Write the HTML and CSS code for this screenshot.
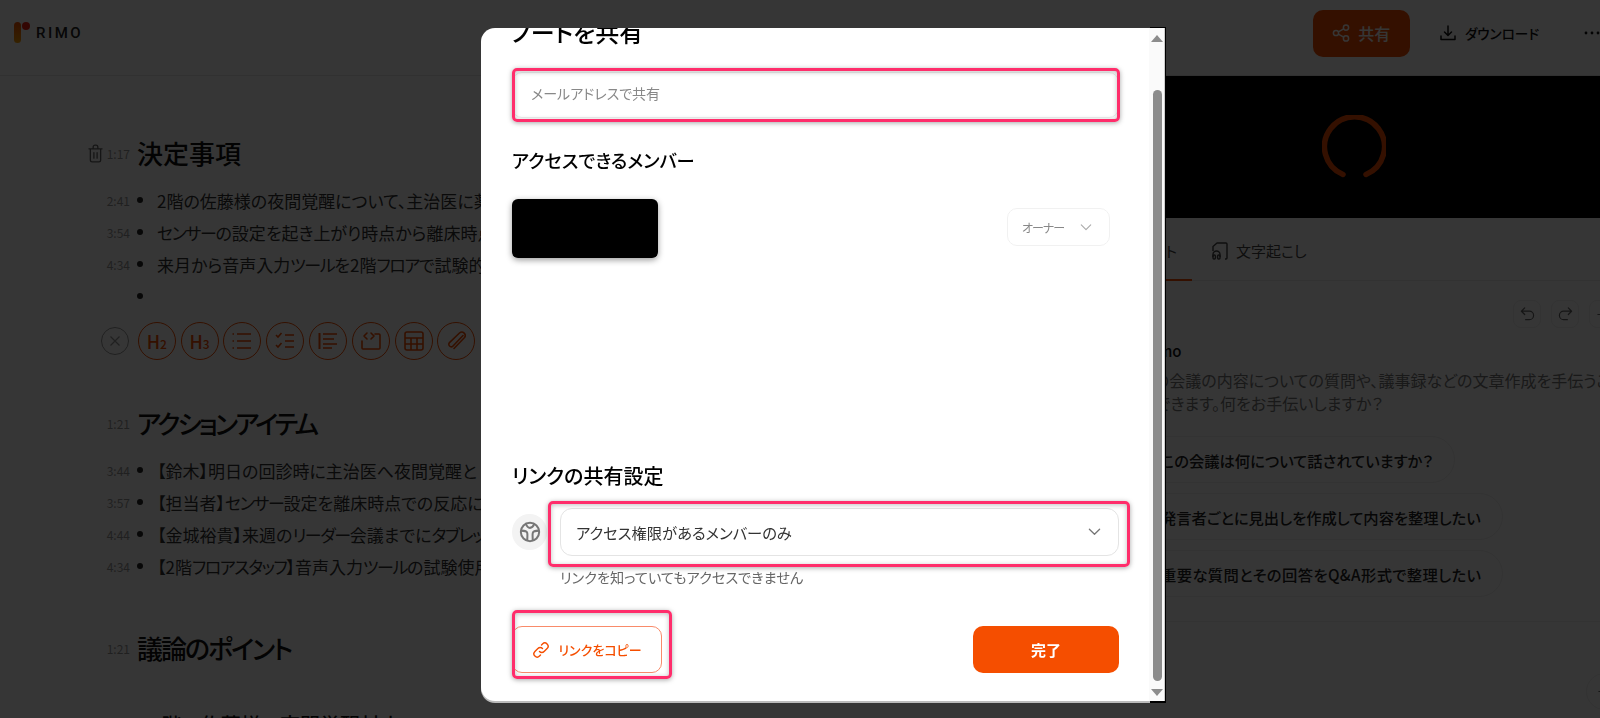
FILE: index.html
```html
<!DOCTYPE html>
<html lang="ja">
<head>
    <meta charset="UTF-8">
    <meta name="viewport" content="width=device-width, initial-scale=1.0">
    <title>RIMO ノートを共有</title>
    <link rel="stylesheet" href="styles.css">
</head>
<body>

<div class="app">
    <header class="topbar">
        <div class="logo">
            <span class="logo-bar"></span>
            <span class="logo-dot"></span>
            <span class="logo-text">RIMO</span>
        </div>
        <div class="topbar-actions">
            <button class="share-btn">
                <svg class="icon-18" viewBox="0 0 18 18" fill="none" stroke="currentColor" stroke-width="1.5"><circle cx="4" cy="9" r="2.6"/><circle cx="14" cy="3.6" r="2.6"/><circle cx="14" cy="14.4" r="2.6"/><path d="M6.3 7.8 11.7 4.9M6.3 10.2l5.4 2.9"/></svg>
                共有
            </button>
            <button class="download-btn">
                <svg class="icon-18" viewBox="0 0 18 18" fill="none" stroke="currentColor" stroke-width="1.5" stroke-linecap="round" stroke-linejoin="round"><path d="M9 2v9M5.5 8 9 11.5 12.5 8M2 12v3.5h14V12"/></svg>
                ダウンロード
            </button>
            <svg class="more-icon" viewBox="0 0 16 4" fill="currentColor"><circle cx="2" cy="2" r="1.4"/><circle cx="8" cy="2" r="1.4"/><circle cx="14" cy="2" r="1.4"/></svg>
        </div>
    </header>

    <div class="columns">
        <main class="note">
            <div class="note-heading">
                <span class="time">
                    <svg class="trash" viewBox="0 0 16 20" fill="none" stroke="currentColor" stroke-width="1.4" stroke-linecap="round" stroke-linejoin="round"><path d="M1 5h14M5.5 5V3a2 2 0 0 1 2-2h1a2 2 0 0 1 2 2v2M2.5 5v12a2 2 0 0 0 2 2h7a2 2 0 0 0 2-2V5M6.3 9v6M9.7 9v6"/></svg>
                    1:17
                </span>
                <h2>決定事項</h2>
            </div>
            <ul class="note-list">
                <li><span class="time">2:41</span><span class="dot"></span>2階の佐藤様の夜間覚醒について、主治医に薬</li>
                <li><span class="time">3:54</span><span class="dot"></span><span class="kana">センサー</span>の設定を起き上がり時点から離床時点</li>
                <li><span class="time">4:34</span><span class="dot"></span>来月から音声入力<span class="kana">ツール</span>を2階<span class="kana">フロア</span>で試験的に</li>
                <li><span class="time"></span><span class="dot"></span></li>
            </ul>
            <div class="editor-tools">
                <button class="tool tool-close">
                    <svg viewBox="0 0 12 12" fill="none" stroke="currentColor" stroke-width="1.2"><path d="M1.5 1.5l9 9M10.5 1.5l-9 9"/></svg>
                </button>
                <button class="tool">H<small>2</small></button>
                <button class="tool">H<small>3</small></button>
                <button class="tool">
                    <svg viewBox="0 0 20 18" fill="none" stroke="currentColor" stroke-width="1.6"><path d="M5 2h14M5 9h14M5 16h14"/><path d="M0.5 2h1.5M0.5 9h1.5M0.5 16h1.5"/></svg>
                </button>
                <button class="tool">
                    <svg viewBox="0 0 20 18" fill="none" stroke="currentColor" stroke-width="1.6"><path d="M10 3h9M10 9h9M10 15h9"/><path d="M1 3l2 2 3.5-4M1 13l2 2 3.5-4"/></svg>
                </button>
                <button class="tool">
                    <svg viewBox="0 0 20 18" fill="none" stroke="currentColor" stroke-width="1.6"><path d="M1.5 1v16" stroke-width="2"/><path d="M5 2h14M5 7h11M5 12h14M5 16h9"/></svg>
                </button>
                <button class="tool">
                    <svg viewBox="0 0 20 18" fill="none" stroke="currentColor" stroke-width="1.6" stroke-linejoin="round" stroke-linecap="round"><path d="M1 9v7a1 1 0 0 0 1 1h16a1 1 0 0 0 1-1V3a1 1 0 0 0-1-1h-4"/><path d="M6 1 3 4l3 3M10 1l3 3-3 3"/></svg>
                </button>
                <button class="tool">
                    <svg viewBox="0 0 20 20" fill="none" stroke="currentColor" stroke-width="1.6"><rect x="1" y="1" width="18" height="18" rx="2"/><path d="M1 7h18M1 13h18M7 7v12M13 7v12"/></svg>
                </button>
                <button class="tool">
                    <svg viewBox="0 0 20 20" fill="none" stroke="currentColor" stroke-width="1.6" stroke-linecap="round"><path d="M17 4.5 7 15a2.4 2.4 0 0 1-3.5-3.4L13.5 2a3.4 3.4 0 0 1 4.8 4.8L8 17.5"/></svg>
                </button>
            </div>

            <div class="note-heading second">
                <span class="time">1:21</span>
                <h2>アクションアイテム</h2>
            </div>
            <ul class="note-list">
                <li><span class="time">3:44</span><span class="dot"></span>【鈴木】明日の回診時に主治医へ夜間覚醒と</li>
                <li><span class="time">3:57</span><span class="dot"></span>【担当者】<span class="kana">センサー</span>設定を離床時点での反応に</li>
                <li><span class="time">4:44</span><span class="dot"></span>【金城裕貴】来週の<span class="kana">リーダー</span>会議までに<span class="kana">タブレット</span></li>
                <li><span class="time">4:34</span><span class="dot"></span>【2階<span class="kana">フロアスタッフ</span>】音声入力<span class="kana">ツール</span>の試験使用</li>
            </ul>

            <div class="note-heading third">
                <span class="time">1:21</span>
                <h2>議論のポイント</h2>
            </div>
            <h3 class="note-sub">2階の佐藤様の夜間覚醒対応</h3>
        </main>

        <aside class="side">
            <div class="video">
                <svg class="spinner" viewBox="0 0 64 64" fill="none" stroke="#f54e00" stroke-width="5.5" stroke-linecap="round"><path d="M21 59.5A30 30 0 1 1 44 59.5"/></svg>
            </div>
            <nav class="tabs">
                <span class="tab active">ノート</span>
                <span class="tab">
                    <svg class="icon-18" viewBox="0 0 16 18" fill="none" stroke="currentColor" stroke-width="1.4" stroke-linejoin="round"><path d="M1 9V4.500L5 1h9a1 1 0 0 1 1 1v14a1 1 0 0 1-1 1h-1"/><path d="M1 15v-2.500a3.500 3.500 0 0 1 7 0V15"/><rect x="1" y="13" width="2.400" height="4" rx="1"/><rect x="5.600" y="13" width="2.400" height="4" rx="1"/></svg>
                    文字起こし
                </span>
            </nav>
            <div class="chat-tools">
                <button class="chat-tool">
                    <svg viewBox="0 0 16 16" fill="none" stroke="currentColor" stroke-width="1.3" stroke-linecap="round" stroke-linejoin="round"><path d="M5 1 1.500 4.500 5 8M1.500 4.500H10a4.500 4.500 0 0 1 0 9H6"/></svg>
                </button>
                <button class="chat-tool">
                    <svg viewBox="0 0 16 16" fill="none" stroke="currentColor" stroke-width="1.3" stroke-linecap="round" stroke-linejoin="round"><path d="M11 1l3.500 3.500L11 8M14.500 4.500H6a4.500 4.500 0 0 0 0 9h4"/></svg>
                </button>
                <button class="chat-tool">
                    <svg viewBox="0 0 16 16" fill="none" stroke="currentColor" stroke-width="1.3" stroke-linecap="round"><path d="M8 2v12M2 8h12"/></svg>
                </button>
            </div>
            <div class="chat">
                <strong class="chat-name">Rimo</strong>
                <p class="chat-intro">この会議の内容についての質問や、議事録などの文章作成を手伝うこと<br>ができます。何をお手伝いしますか？</p>
                <div class="chip">この会議は何について話されていますか？</div>
                <div class="chip">発言者ごとに見出しを作成して内容を整理したい</div>
                <div class="chip chip-wide">重要な質問とその回答をQ&amp;A形式で整理したい</div>
            </div>
            <div class="chat-footer">
                <span class="round-btn">
                    <svg viewBox="0 0 16 16" fill="none" stroke="currentColor" stroke-width="1.3" stroke-linecap="round"><path d="M8 2v12M2 8h12"/></svg>
                </span>
            </div>
        </aside>
    </div>
</div>

<div class="overlay">
    <div class="modal">
        <div class="modal-body">
            <h2 class="modal-title">ノートを共有</h2>
            <div class="annotated email-wrap">
                <input class="email-input" type="text" placeholder="メールアドレスで共有">
                <span class="mark"></span>
            </div>

            <h3 class="section-title members-title">アクセスできるメンバー</h3>
            <div class="member-row">
                <div class="redacted"></div>
                <div class="owner-select">
                    オーナー
                    <svg class="chevron" viewBox="0 0 14 8" fill="none" stroke="currentColor" stroke-width="1.300" stroke-linecap="round" stroke-linejoin="round"><path d="M1.500 1 7 6.500 12.500 1"/></svg>
                </div>
            </div>

            <h3 class="section-title link-title">リンクの共有設定</h3>
            <div class="link-row">
                <span class="globe">
                    <svg viewBox="0 0 24 24" fill="none" stroke="currentColor" stroke-width="2.200" stroke-linejoin="round" stroke-linecap="round"><circle cx="12" cy="12" r="10"/><path d="M2.500 10.500c3 0 6 .5 6.500 2.500s0 5 0 8"/><path d="M21.500 10.500c-3 0-6 .5-6.500 2.500s0 5 0 8"/><path d="M7.500 3c1 3 2.500 4.500 4.500 4.500s3.500-1.500 4.500-4"/></svg>
                </span>
                <div class="annotated access-wrap">
                    <div class="access-select">
                        アクセス権限があるメンバーのみ
                        <svg class="chevron" viewBox="0 0 14 8" fill="none" stroke="currentColor" stroke-width="1.400" stroke-linecap="round" stroke-linejoin="round"><path d="M1.500 1 7 6.500 12.500 1"/></svg>
                    </div>
                    <span class="mark"></span>
                </div>
            </div>
            <p class="link-help">リンクを知っていてもアクセスできません</p>

            <div class="modal-footer">
                <div class="annotated copy-wrap">
                    <button class="copy-btn">
                        <svg viewBox="0 0 18 18" fill="none" stroke="currentColor" stroke-width="1.400" stroke-linecap="round"><path d="M7.500 10.500a3.200 3.200 0 0 0 4.600 0l3-3a3.250 3.250 0 0 0-4.600-4.600l-1 1"/><path d="M10.500 7.500a3.200 3.200 0 0 0-4.600 0l-3 3a3.250 3.250 0 0 0 4.600 4.600l1-1"/></svg>
                        リンクをコピー
                    </button>
                    <span class="mark"></span>
                </div>
                <button class="done-btn">完了</button>
            </div>
        </div>
        <div class="scrollbar">
            <span class="arrow-up"></span>
            <span class="thumb"></span>
            <span class="arrow-down"></span>
        </div>
    </div>
</div>

</body>
</html>
```

FILE: styles.css
```css
* {
    box-sizing: border-box;
}
body {
    margin: 0;
    height: 100vh;
    overflow: hidden;
    font-family: "Noto Sans CJK JP", "Noto Sans", sans-serif;
    font-feature-settings: "palt";
    color: #111;
    background: #fff;
}
button {
    font-family: inherit;
    font-feature-settings: inherit;
    border: none;
    background: none;
    padding: 0;
}
h2, h3, p, ul {
    margin: 0;
    padding: 0;
}
.icon-18 {
    width: 18px;
    height: 18px;
}

/* page under the dialog */
.app {
    display: flex;
    flex-direction: column;
    height: 100vh;
}
.topbar {
    display: flex;
    justify-content: space-between;
    align-items: center;
    height: 76px;
    flex: none;
    border-bottom: 1px solid #e6e6e6;
    padding: 0 0 9px 14px;
}
.logo {
    display: flex;
    align-items: flex-start;
    height: 22px;
}
.logo-bar {
    width: 7px;
    height: 21px;
    border-radius: 4px;
    background: linear-gradient(#f54e00, #f9a000);
}
.logo-dot {
    width: 8px;
    height: 8px;
    margin: 0 0 0 1px;
    border-radius: 50%;
    background: #f02010;
}
.logo-text {
    margin: 2px 0 0 6px;
    font-family: Roboto, sans-serif;
    font-weight: 500;
    font-size: 15px;
    line-height: 18px;
    letter-spacing: 2.5px;
    color: #222;
}
.topbar-actions {
    display: flex;
    align-items: center;
}
.share-btn {
    display: flex;
    align-items: center;
    justify-content: center;
    gap: 8px;
    width: 97px;
    height: 47px;
    border-radius: 10px;
    background: #f54e00;
    color: #fff;
    font-size: 16px;
    font-weight: 500;
}
.download-btn {
    display: flex;
    align-items: center;
    gap: 8px;
    margin-left: 29px;
    font-size: 13.6px;
    font-weight: 500;
    color: #111;
}
.more-icon {
    width: 16px;
    height: 4px;
    margin-left: 45px;
    color: #111;
}
.columns {
    display: flex;
    flex: 1;
    min-height: 0;
}

/* note */
.note {
    flex: 1;
    min-width: 0;
    padding: 57px 0 0 80px;
    overflow: hidden;
    white-space: nowrap;
}
.note-heading {
    display: flex;
    align-items: center;
    height: 40px;
}
.note-heading.second {
    margin-top: 43px;
}
.note-heading.third {
    margin-top: 46px;
}
.note-heading h2 {
    margin: -2px 0 0 7px;
    font-size: 26px;
    font-weight: 500;
    color: #111;
}
.note-heading.second h2 {
    letter-spacing: -2.9px;
}
.note-heading.third h2 {
    letter-spacing: -2px;
}
.time {
    display: flex;
    justify-content: flex-end;
    align-items: center;
    gap: 4px;
    width: 50px;
    flex: none;
    font-size: 12px;
    color: #999;
}
.trash {
    width: 15px;
    height: 19px;
    color: #666;
}
.note-list {
    list-style: none;
    margin-top: 11px;
}
.note-list li {
    display: flex;
    align-items: center;
    height: 32px;
    font-size: 17px;
    color: #333;
}
.kana {
    letter-spacing: -1.4px;
}
.dot {
    width: 6px;
    height: 6px;
    margin: 0 14px 0 7px;
    border-radius: 50%;
    background: #222;
    flex: none;
}
.editor-tools {
    display: flex;
    align-items: center;
    gap: 4.8px;
    margin: 10px 0 0 21px;
}
.tool {
    display: flex;
    align-items: center;
    justify-content: center;
    width: 38px;
    height: 38px;
    flex: none;
    border: 1px solid #f54e00;
    border-radius: 50%;
    color: #f54e00;
    font-size: 18px;
    font-weight: 500;
}
.tool svg {
    width: 20px;
    height: 20px;
}
.tool small {
    font-size: 12px;
    margin-top: 5px;
}
.tool-close {
    width: 28px;
    height: 28px;
    border-color: #999;
    color: #999;
    margin-right: 4px;
}
.tool-close svg {
    width: 12px;
    height: 12px;
}
.note-sub {
    margin: 42px 0 0 70px;
    font-size: 20px;
    font-weight: 500;
}

/* right side */
.side {
    display: flex;
    flex-direction: column;
    width: 476px;
    flex: none;
    overflow: hidden;
}
.video {
    display: flex;
    align-items: center;
    justify-content: center;
    height: 142px;
    flex: none;
    background: #000;
}
.spinner {
    width: 64px;
    height: 64px;
    margin-left: -16px;
}
.tabs {
    display: flex;
    height: 63px;
    flex: none;
    border-bottom: 1px solid #ededed;
}
.tab {
    display: flex;
    align-items: center;
    gap: 7px;
    padding: 3px 19px 0;
    font-size: 15px;
    color: #444;
}
.tab.active {
    width: 68px;
    padding: 3px 0 0 15px;
    border-bottom: 2px solid #f54e00;
    margin-bottom: -1px;
}
.chat-tools {
    display: flex;
    justify-content: flex-end;
    gap: 10px;
    margin: 19px -17px 0 0;
}
.chat-tool {
    display: flex;
    align-items: center;
    justify-content: center;
    width: 28px;
    height: 28px;
    border: 1px solid #eee;
    border-radius: 8px;
    color: #666;
}
.chat-tool svg {
    width: 15px;
    height: 15px;
}
.chat {
    padding: 0 0 0 20px;
    border-bottom: 1px solid #eee;
    height: 294px;
}
.chat-name {
    display: block;
    margin-top: 11px;
    font-size: 15px;
    font-weight: 500;
    line-height: 24px;
}
.chat-intro {
    margin: 6px 0 0 -4px;
    font-size: 16px;
    line-height: 23px;
    color: #777;
    white-space: nowrap;
}
.chip {
    width: fit-content;
    margin-bottom: 10px;
    padding: 0 21px 0 16px;
    height: 47px;
    display: flex;
    align-items: center;
    border: 1px solid #eee;
    border-radius: 24px;
    font-size: 15.3px;
    font-weight: 500;
    color: #222;
    white-space: nowrap;
}
.chip-wide {
    letter-spacing: 0.4px;
}
.chat-intro + .chip {
    margin-top: 21px;
}
.chat-footer {
    display: flex;
    justify-content: flex-end;
    margin: 51px -23px 0 0;
}
.round-btn {
    display: flex;
    align-items: center;
    justify-content: center;
    width: 37px;
    height: 37px;
    border: 1px solid #eee;
    border-radius: 50%;
    color: #666;
}
.round-btn svg {
    width: 15px;
    height: 15px;
}

/* dialog */
.overlay {
    position: fixed;
    inset: 0;
    display: flex;
    padding: 28px 435px 15px 481px;
    background: rgba(0, 0, 0, 0.79);
}
.modal {
    display: flex;
    width: 684px;
    height: 673px;
    background: #fff;
    border-radius: 14px 0 0 14px;
    box-shadow: 0 2px 0 #bbb;
}
.modal-body {
    flex: 1;
    min-width: 0;
    padding: 0 30px 0 31px;
    overflow: hidden;
    border-radius: 14px 0 0 14px;
}
.modal-title {
    margin-top: -11px;
    font-size: 24px;
    font-weight: 500;
    line-height: 30px;
    color: #000;
}
.annotated {
    position: relative;
}
.mark {
    position: absolute;
    border: 3px solid #ff2d6b;
    border-radius: 5px;
    box-shadow: 0 1px 5px rgba(0, 0, 0, 0.35), inset 0 1px 5px rgba(0, 0, 0, 0.25);
    pointer-events: none;
}
.email-wrap {
    height: 46px;
    margin-top: 25px;
}
.email-wrap .mark {
    inset: -4px -1px -4px 0;
}
.email-input {
    display: block;
    width: 100%;
    height: 100%;
    padding: 0 18px 4px;
    border: 1px solid #eee;
    border-radius: 10px;
    outline: none;
    font-family: inherit;
    font-feature-settings: inherit;
    font-size: 14px;
}
.email-input::placeholder {
    color: #888;
}
.section-title {
    font-size: 18.3px;
    font-weight: 500;
    line-height: 26px;
    color: #000;
}
.members-title {
    margin-top: 29px;
}
.member-row {
    display: flex;
    justify-content: space-between;
    align-items: center;
    height: 59px;
    margin-top: 26px;
}
.redacted {
    width: 146px;
    height: 59px;
    background: #000;
    border-radius: 6px;
    box-shadow: 0 2px 6px rgba(0, 0, 0, 0.4);
}
.owner-select {
    display: flex;
    align-items: center;
    justify-content: space-between;
    width: 103px;
    height: 38px;
    margin: -3px 9px 0 0;
    padding: 0 17px 0 14px;
    border: 1px solid #f1f1f1;
    border-radius: 10px;
    font-size: 12px;
    letter-spacing: -1px;
    color: #888;
}
.owner-select .chevron {
    width: 12px;
    height: 7px;
    color: #aaa;
}
.link-title {
    margin-top: 205px;
    font-size: 20px;
}
.link-row {
    display: flex;
    align-items: center;
    gap: 13px;
    margin-top: 19px;
}
.globe {
    display: flex;
    align-items: center;
    justify-content: center;
    width: 35px;
    height: 36px;
    flex: none;
    border-radius: 50%;
    background: #f3f3f3;
    color: #777;
}
.globe svg {
    width: 22px;
    height: 22px;
}
.access-wrap {
    flex: 1;
}
.access-wrap .mark {
    inset: -7px -11px -11px -12px;
}
.access-select {
    display: flex;
    align-items: center;
    justify-content: space-between;
    height: 48px;
    padding: 0 17px 0 15px;
    border: 1px solid #e4e4e4;
    border-radius: 12px;
    font-size: 15.3px;
    color: #333;
}
.access-select .chevron {
    width: 13px;
    height: 8px;
    color: #777;
}
.link-help {
    margin: 11px 0 0 48px;
    font-size: 14.2px;
    line-height: 20px;
    color: #666;
}
.modal-footer {
    display: flex;
    justify-content: space-between;
    margin-top: 39px;
}
.copy-wrap .mark {
    inset: -16px -10px -6px 0;
}
.copy-btn {
    display: flex;
    align-items: center;
    justify-content: center;
    gap: 8px;
    width: 150px;
    height: 47px;
    border: 1px solid #f98b6a;
    border-radius: 10px;
    color: #f54e00;
    font-size: 13px;
    font-weight: 500;
}
.copy-btn svg {
    width: 18px;
    height: 18px;
}
.done-btn {
    width: 146px;
    height: 47px;
    border-radius: 10px;
    background: #f54e00;
    color: #fff;
    font-size: 15px;
    font-weight: 700;
}
.scrollbar {
    display: flex;
    flex-direction: column;
    align-items: center;
    width: 16px;
    flex: none;
    padding: 7px 0 5px;
    background: #fafafa;
    box-shadow: inset -1px 0 0 #ccc, 1px -1px 0 #000, 1px 2px 0 #000;
}
.arrow-up,
.arrow-down {
    width: 0;
    height: 0;
    border-left: 6px solid transparent;
    border-right: 6px solid transparent;
    flex: none;
}
.arrow-up {
    border-bottom: 7px solid #8c8c8c;
}
.arrow-down {
    border-top: 7px solid #8c8c8c;
}
.thumb {
    width: 9px;
    flex: 1;
    margin: 48px 0 8px;
    border-radius: 5px;
    background: #8c8c8c;
}
```
